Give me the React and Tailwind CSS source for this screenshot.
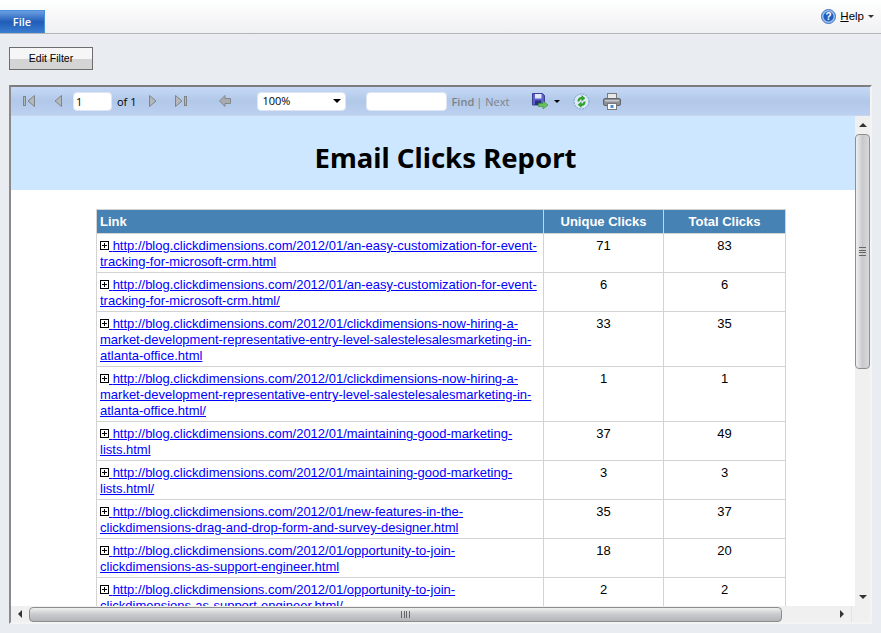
const rows = [
  ["http://blog.clickdimensions.com/2012/01/an-easy-customization-for-event-tracking-for-microsoft-crm.html", 71, 83],
  ["http://blog.clickdimensions.com/2012/01/an-easy-customization-for-event-tracking-for-microsoft-crm.html/", 6, 6],
  ["http://blog.clickdimensions.com/2012/01/clickdimensions-now-hiring-a-market-development-representative-entry-level-salestelesalesmarketing-in-atlanta-office.html", 33, 35],
  ["http://blog.clickdimensions.com/2012/01/clickdimensions-now-hiring-a-market-development-representative-entry-level-salestelesalesmarketing-in-atlanta-office.html/", 1, 1],
  ["http://blog.clickdimensions.com/2012/01/maintaining-good-marketing-lists.html", 37, 49],
  ["http://blog.clickdimensions.com/2012/01/maintaining-good-marketing-lists.html/", 3, 3],
  ["http://blog.clickdimensions.com/2012/01/new-features-in-the-clickdimensions-drag-and-drop-form-and-survey-designer.html", 35, 37],
  ["http://blog.clickdimensions.com/2012/01/opportunity-to-join-clickdimensions-as-support-engineer.html", 18, 20],
  ["http://blog.clickdimensions.com/2012/01/opportunity-to-join-clickdimensions-as-support-engineer.html/", 2, 2],
];

const NavIcon = ({ kind }) => (
  <svg width="14" height="14" viewBox="0 0 14 14" className="shrink-0">
    {kind === "first" && (
      <g fill="#b4b8bc" stroke="#7f8488">
        <rect x="1.5" y="2.5" width="2" height="9" />
        <path d="M12.5 1.5v11L6 7z" />
      </g>
    )}
    {kind === "prev" && <path d="M10.5 1.5v11L4 7z" fill="#b4b8bc" stroke="#7f8488" />}
    {kind === "next" && <path d="M3.5 1.5v11L10 7z" fill="#b4b8bc" stroke="#7f8488" />}
    {kind === "last" && (
      <g fill="#b4b8bc" stroke="#7f8488">
        <path d="M1.5 1.5v11L8 7z" />
        <rect x="10.5" y="2.5" width="2" height="9" />
      </g>
    )}
    {kind === "back" && <path d="M1.5 7 7 1.5v3h5.5v5H7v3z" fill="#a8acb0" stroke="#85898d" />}
  </svg>
);

const SaveIcon = () => (
  <svg width="17" height="17" viewBox="0 0 17 17" className="shrink-0">
    <path d="M.5.5h10l2 2v9.500H.5z" fill="#5a62c8" stroke="#3a4098" />
    <rect x="3" y="1" width="6.500" height="4.500" fill="#e4e6f8" />
    <rect x="3" y="7.500" width="6" height="4.500" fill="#2a2f80" />
    <path d="M6.500 10.500h4.500V8l5 4-5 4v-2.500H6.500z" fill="#6cc05c" stroke="#3a9a3a" strokeWidth=".7" />
  </svg>
);

const RefreshIcon = () => (
  <svg width="17" height="17" viewBox="0 0 17 17" className="shrink-0">
    <circle cx="8.500" cy="8.500" r="7.500" fill="#dbe8f8" stroke="#6f9ad0" strokeDasharray="2 1" />
    <path d="M4.500 8.500c0-3 1.500-4.500 4-4.500V2l3.800 3.200L8.500 8.500V6.300c-1 0-2 .8-2 2.200z" fill="#35a02c" />
    <path d="M12.500 8.500c0 3-1.500 4.500-4 4.500v2l-3.800-3.200L8.500 8.500v2.200c1 0 2-.8 2-2.200z" fill="#35a02c" />
  </svg>
);

const PrintIcon = () => (
  <svg width="18" height="17" viewBox="0 0 18 17" className="shrink-0">
    <rect x="4.500" y=".5" width="9" height="6" fill="#e8e8e8" stroke="#77797c" />
    <rect x=".5" y="5.500" width="17" height="7" rx="1.500" fill="#8c9096" stroke="#63666a" />
    <rect x="2" y="7" width="14" height="1.500" fill="#c6c9cc" />
    <rect x="4.500" y="10.500" width="9" height="6" fill="#fff" stroke="#77797c" />
    <rect x="7.500" y="12" width="3" height="3" fill="#4a8fd0" />
  </svg>
);

const HelpIcon = () => (
  <svg width="15" height="15" viewBox="0 0 15 15" className="shrink-0">
    <circle cx="7.500" cy="7.500" r="7" fill="#9dbdea" stroke="#3f74c4" />
    <circle cx="7.500" cy="7.500" r="5" fill="#1f5fc0" />
    <text x="7.500" y="11" textAnchor="middle" fontSize="10" fontWeight="700" fill="#fff" fontFamily="Liberation Sans">?</text>
  </svg>
);

const PlusBox = () => (
  <svg width="9" height="9" viewBox="0 0 9 9" className="inline-block align-[0px]">
    <rect x=".5" y=".5" width="8" height="8" fill="#fff" stroke="#000" />
    <path d="M2 4.500h5M4.500 2v5" stroke="#000" />
  </svg>
);

const SmallCaret = ({ className }) => (
  <span className={`w-0 h-0 border-x-[3px] border-x-transparent border-t-[3px] shrink-0 ${className}`} />
);

const BigCaret = () => (
  <span className="w-0 h-0 border-x-[4px] border-x-transparent border-t-[4px] border-t-black shrink-0" />
);

export default function App() {
  return (
    <div className="w-[881px] h-[633px] overflow-hidden flex flex-col bg-[#e9ecf1] font-['Liberation_Sans',sans-serif]">
      {/* top menu */}
      <div className="h-[34px] shrink-0 flex items-end justify-between border-b border-[#b4b6ba] bg-gradient-to-b from-white to-[#eff0f2]">
        <div className="w-[45px] h-[23px] flex items-center justify-center border border-l-0 border-b-0 border-[#4a8ee0] bg-gradient-to-b from-[#6a9fe0] via-[#1f5cb8] to-[#3b7fd0] text-white text-[11px] font-semibold font-['Open_Sans',sans-serif]">
          File
        </div>
        <div className="self-start flex items-center mt-[8px] mr-[7px] text-[11.500px] text-black">
          <HelpIcon />
          <span className="ml-[4px]"><span className="underline">H</span>elp</span>
          <SmallCaret className="ml-[4px] border-t-[#333]" />
        </div>
      </div>

      {/* filter */}
      <div className="h-[51px] shrink-0 pl-[9px] pt-[13px]">
        <button className="block w-[84px] h-[23px] border border-[#6d6d6d] bg-gradient-to-b from-[#f6f6f6] from-50% to-[#d4d4d4] to-50% text-[10.500px] text-black">
          Edit Filter
        </button>
      </div>

      {/* report viewer */}
      <div className="w-[863px] h-[539px] ml-[9px] shrink-0 flex flex-col border-2 border-t-2 border-[#7d7d7d] border-r-[#f4f4f4] border-b-[#f4f4f4] border-l-[#8a8a8a]">
        <div className="h-[29px] shrink-0 flex items-center border-b border-[#c9d6e8] bg-gradient-to-b from-[#c6d9f7] via-[#b2c8e8] to-[#bcd1f2] text-[11px] font-['Open_Sans',sans-serif]">
          <div className="ml-[11px]"><NavIcon kind="first" /></div>
          <div className="ml-[15px]"><NavIcon kind="prev" /></div>
          <input readOnly value="1" className="ml-[8px] w-[39px] h-[19px] bg-white border border-[#dde6f2] rounded-sm px-[2px] text-[11px] text-black outline-none" />
          <span className="ml-[5px] mt-[2px] text-black font-medium">of 1</span>
          <div className="ml-[10px]"><NavIcon kind="next" /></div>
          <div className="ml-[14px]"><NavIcon kind="last" /></div>
          <div className="ml-[30px]"><NavIcon kind="back" /></div>
          <div className="ml-[25px] w-[89px] h-[19px] flex items-center justify-between bg-white border border-[#dde6f2] rounded-sm pl-[4px] pr-[4px] text-black">
            100%
            <BigCaret />
          </div>
          <input readOnly className="ml-[20px] w-[81px] h-[19px] bg-white border border-[#dde6f2] rounded-sm outline-none" />
          <span className="ml-[4px] mt-[2px] text-[#7d8288] font-semibold">Find</span>
          <span className="ml-[2px] mt-[2px] text-[#7d8288]">|</span>
          <span className="ml-[3px] mt-[2px] text-[#7d8288] font-medium">Next</span>
          <div className="ml-[23px]"><SaveIcon /></div>
          <SmallCaret className="ml-[5px] border-t-black" />
          <div className="ml-[13px]"><RefreshIcon /></div>
          <div className="ml-[13px]"><PrintIcon /></div>
        </div>

        <div className="flex-1 min-h-0 flex">
          {/* report body, clipped by the viewer */}
          <div className="w-[844px] overflow-hidden bg-white">
            <div className="h-[74px] pt-[10px] pl-[25px] flex items-center justify-center bg-[#cce7ff] text-black text-[27.500px] font-bold font-['Noto_Sans',sans-serif]">
              Email Clicks Report
            </div>
            <table className="ml-[85px] mt-[19px] w-[689px] table-fixed border-collapse text-[13px] leading-[16px] text-black">
              <colgroup>
                <col className="w-[447px]" />
                <col className="w-[120px]" />
                <col className="w-[122px]" />
              </colgroup>
              <thead>
                <tr className="bg-[#4682b4] text-white font-bold h-[24px]">
                  <th className="border border-[#d3d3d3] px-[3px] text-left font-bold">Link</th>
                  <th className="border border-[#d3d3d3] px-[3px] text-center font-bold">Unique Clicks</th>
                  <th className="border border-[#d3d3d3] px-[3px] text-center font-bold">Total Clicks</th>
                </tr>
              </thead>
              <tbody>
                {rows.map(([url, unique, total], i) => (
                  <tr key={i}>
                    <td className="border border-[#d3d3d3] px-[3px] pt-[4px] pb-[2px] align-top">
                      <PlusBox />
                      <a className="text-[#0000ff] underline">{"\u00a0"}{url}</a>
                    </td>
                    <td className="border border-[#d3d3d3] px-[3px] pt-[4px] align-top text-center">{unique}</td>
                    <td className="border border-[#d3d3d3] px-[3px] pt-[4px] align-top text-center">{total}</td>
                  </tr>
                ))}
              </tbody>
            </table>
          </div>

          {/* vertical scrollbar */}
          <div className="w-[15px] flex flex-col items-center bg-[#f0f0f0]">
            <div className="h-[18px] shrink-0 flex items-center justify-center">
              <span className="w-0 h-0 border-x-[4px] border-x-transparent border-b-[4px] border-b-[#333]" />
            </div>
            <div className="w-[15px] h-[235px] shrink-0 flex items-center justify-center rounded-sm border border-[#8e8e8e] bg-gradient-to-r from-[#f0f0f0] via-[#c8c9cc] to-[#d8d9dc]">
              <div className="w-[7px] h-[9px] border-y border-[#666] flex items-center"><div className="w-full h-[3px] border-y border-[#666]" /></div>
            </div>
            <div className="flex-1" />
            <div className="h-[18px] shrink-0 flex items-center justify-center">
              <span className="w-0 h-0 border-x-[4px] border-x-transparent border-t-[4px] border-t-[#333]" />
            </div>
          </div>
        </div>

        {/* horizontal scrollbar */}
        <div className="h-[16px] shrink-0 flex items-center bg-[#f0f0f0]">
          <div className="w-[18px] flex justify-center">
            <span className="w-0 h-0 border-y-[4px] border-y-transparent border-r-[4px] border-r-[#333]" />
          </div>
          <div className="w-[753px] h-[15px] flex items-center justify-center rounded-sm border border-[#8e8e8e] bg-gradient-to-b from-[#f0f0f0] via-[#c8c9cc] to-[#b4b5b8]">
            <div className="h-[7px] w-[9px] border-x border-[#666] flex justify-center"><div className="h-full w-[3px] border-x border-[#666]" /></div>
          </div>
          <div className="flex-1 flex justify-end pr-[7px]">
            <span className="w-0 h-0 border-y-[4px] border-y-transparent border-l-[4px] border-l-[#333]" />
          </div>
          <div className="w-[19px] h-full border-l border-[#e4e4e4]" />
        </div>
      </div>
    </div>
  );
}
